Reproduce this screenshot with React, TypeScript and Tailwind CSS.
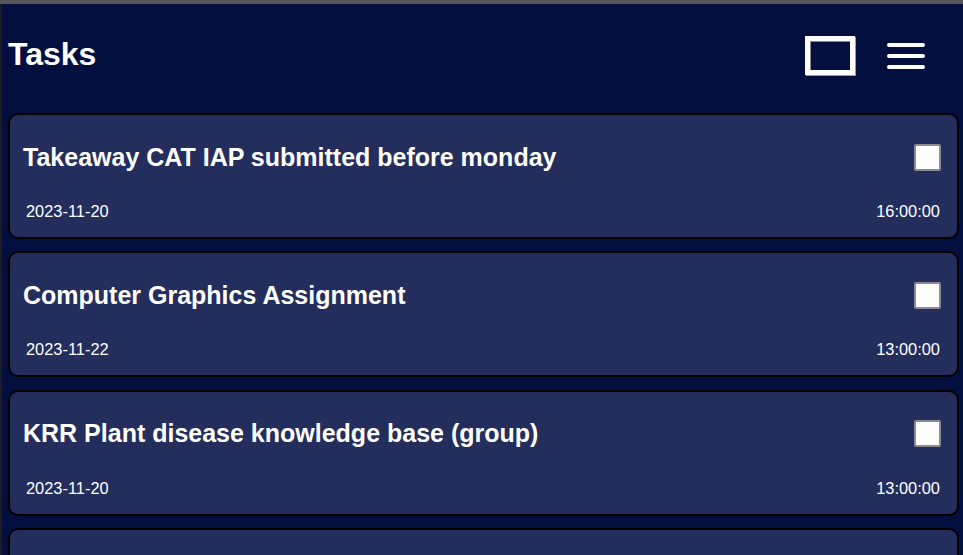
const tasks = [
  { title: "Takeaway CAT IAP submitted before monday", date: "2023-11-20", time: "16:00:00" },
  { title: "Computer Graphics Assignment", date: "2023-11-22", time: "13:00:00" },
  { title: "KRR Plant disease knowledge base (group)", date: "2023-11-20", time: "13:00:00" },
];

function TaskCard({ title, date, time }: { title: string; date: string; time: string }) {
  return (
    <div className="h-[126px] shrink-0 rounded-[10px] border-2 border-black bg-[#232e5d] pl-[13px] pr-[16px] pt-[26px]">
      <div className="flex h-[32px] items-center justify-between">
        <h2 className="text-[25px] font-bold leading-none text-white">{title}</h2>
        <div className="h-[27px] w-[27px] rounded-[2px] border-2 border-[#8a8a96] bg-white" />
      </div>
      <div className="mt-[30px] flex items-center justify-between pl-[3px] pr-[1px] text-[16.4px] leading-none text-white">
        <span>{date}</span>
        <span>{time}</span>
      </div>
    </div>
  );
}

export default function App() {
  return (
    <div
      className="flex h-[555px] flex-col overflow-hidden bg-[#03103f]"
      style={{ fontFamily: '"Liberation Sans", Arial, sans-serif' }}
    >
      <div className="h-[4px] shrink-0 bg-[#565656]" />
      <div className="flex min-h-0 flex-1">
        <div className="w-[2px] shrink-0 bg-[#1c1c24]" />
        <div className="flex min-w-0 flex-1 flex-col pl-[6px] pr-[4px]">
          <header className="flex h-[109px] shrink-0 items-start justify-between">
            <h1 className="mt-[34px] text-[32px] font-bold leading-none text-white">Tasks</h1>
            <div className="mr-[34px] mt-[32px] flex items-center gap-[32px]">
              <div className="h-[39px] w-[50px] border-[5px] border-white shadow-[1px_1px_0_#9a9aa0,inset_1px_1px_0_#8a8a90]" />
              <div className="flex w-[38px] flex-col gap-[7px]">
                <span className="h-[4px] rounded-full bg-white" />
                <span className="h-[4px] rounded-full bg-white" />
                <span className="h-[4px] rounded-full bg-white" />
              </div>
            </div>
          </header>
          <div className="flex flex-col gap-[12.3px]">
            {tasks.map((t) => (
              <TaskCard key={t.title} {...t} />
            ))}
            {/* next card, cut off by the bottom of the window */}
            <div className="h-[126px] shrink-0 rounded-[10px] border-2 border-black bg-[#232e5d]" />
          </div>
        </div>
      </div>
    </div>
  );
}
